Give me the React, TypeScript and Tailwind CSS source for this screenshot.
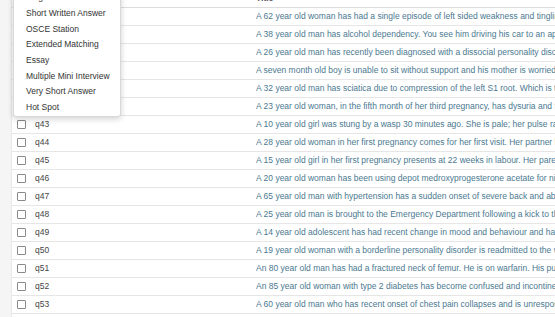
const rows: [string, string][] = [
  ["q37", "A 62 year old woman has had a single episode of left sided weakness and tingling in her left arm"],
  ["q38", "A 38 year old man has alcohol dependency. You see him driving his car to an appointment"],
  ["q39", "A 26 year old man has recently been diagnosed with a dissocial personality disorder"],
  ["q40", "A seven month old boy is unable to sit without support and his mother is worried"],
  ["q41", "A 32 year old man has sciatica due to compression of the left S1 root. Which is the"],
  ["q42", "A 23 year old woman, in the fifth month of her third pregnancy, has dysuria and frequency"],
  ["q43", "A 10 year old girl was stung by a wasp 30 minutes ago. She is pale; her pulse rate is"],
  ["q44", "A 28 year old woman in her first pregnancy comes for her first visit. Her partner has"],
  ["q45", "A 15 year old girl in her first pregnancy presents at 22 weeks in labour. Her parents"],
  ["q46", "A 20 year old woman has been using depot medroxyprogesterone acetate for nine months"],
  ["q47", "A 65 year old man with hypertension has a sudden onset of severe back and abdominal pain"],
  ["q48", "A 25 year old man is brought to the Emergency Department following a kick to the"],
  ["q49", "A 14 year old adolescent has had recent change in mood and behaviour and has"],
  ["q50", "A 19 year old woman with a borderline personality disorder is readmitted to the ward"],
  ["q51", "An 80 year old man has had a fractured neck of femur. He is on warfarin. His pulse"],
  ["q52", "An 85 year old woman with type 2 diabetes has become confused and incontinent"],
  ["q53", "A 60 year old man who has recent onset of chest pain collapses and is unresponsive"],
];

const types = [
  "Single Best Answer",
  "Short Written Answer",
  "OSCE Station",
  "Extended Matching",
  "Essay",
  "Multiple Mini Interview",
  "Very Short Answer",
  "Hot Spot",
];

function Row({ id, title }: { id: string; title: string }) {
  return (
    <div className="flex h-[18px] items-center border-b border-[#e6e6e6]">
      <div className="flex w-[23px] pl-[5px]">
        <span className="h-[9px] w-[9px] rounded-[1px] border border-[#8a8a8a] bg-white" />
      </div>
      <div className="w-[221px] text-[#444]">{id}</div>
      <div className="min-w-0 flex-1 overflow-hidden whitespace-nowrap text-[#4b7990]">{title}</div>
    </div>
  );
}

export default function App() {
  return (
    <div className="relative flex h-[317px] w-[555px] overflow-hidden bg-white text-[8.5px] [font-family:'Liberation_Sans',Arial,sans-serif]">
      <div className="w-[12px] shrink-0 border-r border-[#e8e8e8] bg-[#f5f5f5]" />
      <div className="min-w-0 flex-1">
        <div className="mt-[-10px] flex h-[18px] items-center border-b border-[#dcdcdc] pl-[244px] font-bold text-[#555]">
          Title
        </div>
        {rows.map(([id, title]) => (
          <Row key={id} id={id} title={title} />
        ))}
      </div>

      <div className="absolute left-[13px] top-[-13px] w-[108px] rounded-b-[3px] border border-[#d8d8d8] bg-white pt-[2px] pb-[1px] shadow-[0_2px_6px_rgba(0,0,0,0.18)]">
        {types.map((t) => (
          <div key={t} className="flex h-[15.65px] items-center whitespace-nowrap px-[12px] text-[#333]">
            {t}
          </div>
        ))}
      </div>
    </div>
  );
}
